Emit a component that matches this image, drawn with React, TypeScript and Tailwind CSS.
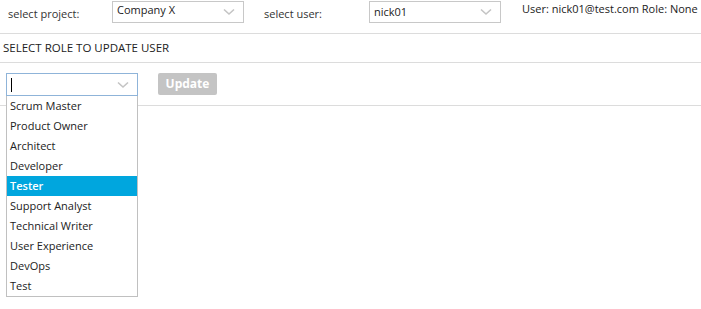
import React from "react";

const Chevron = () => (
  <svg width="12" height="8" viewBox="0 0 12 8" className="shrink-0">
    <path d="M1 1.5 L6 6 L11 1.5" fill="none" stroke="#c4c4c4" strokeWidth="1.6" />
  </svg>
);

const roles = [
  "Scrum Master",
  "Product Owner",
  "Architect",
  "Developer",
  "Tester",
  "Support Analyst",
  "Technical Writer",
  "User Experience",
  "DevOps",
  "Test",
];

export default function App() {
  return (
    <div
      className="w-[701px] h-[309px] bg-white text-[#333] text-[11px] relative overflow-hidden whitespace-nowrap"
      style={{ fontFamily: '"Open Sans", "Noto Sans", sans-serif' }}
    >
      <div className="h-[34px] flex items-start border-b border-[#dcdcdc]">
        <span className="ml-[8px] mt-[6px] w-[104px] shrink-0">select project:</span>
        <div className="shrink-0 mt-[1px] w-[132px] h-[22px] border border-[#c8c8c8] flex items-center justify-between pl-[4px] pr-[8px]">
          <span className="text-[#222] -mt-[3px]">Company X</span>
          <Chevron />
        </div>
        <span className="shrink-0 ml-[20px] mt-[6px] w-[105px]">select user:</span>
        <div className="shrink-0 mt-[1px] w-[132px] h-[22px] border border-[#c8c8c8] flex items-center justify-between pl-[4px] pr-[8px]">
          <span className="text-[#222]">nick01</span>
          <Chevron />
        </div>
        <span className="shrink-0 ml-[21px] mt-[1px] text-[#222]">User: nick01@test.com Role: None</span>
      </div>
      <div className="h-[29px] border-b border-[#dcdcdc] flex items-center pl-[3px] text-[#222] text-[11.5px]">
        SELECT ROLE TO UPDATE USER
      </div>
      <div className="h-[43px] border-b border-[#dcdcdc] flex items-start pt-[10px] pl-[6px]">
        <div className="relative shrink-0">
          <div className="w-[132px] h-[23px] border border-[#8fb4d9] flex items-center justify-between pl-[4px] pr-[8px]">
            <span className="w-px h-[14px] bg-black" />
            <Chevron />
          </div>
          <div className="absolute left-0 top-[23px] w-[132px] border border-t-0 border-[#c0c0c0] bg-white z-10">
            {roles.map((r) => (
              <div
                key={r}
                className={
                  "h-[20px] flex items-center pl-[3px] " +
                  (r === "Tester" ? "bg-[#00a6de] text-white font-semibold" : "text-[#222]")
                }
              >
                {r}
              </div>
            ))}
          </div>
        </div>
        <div className="shrink-0 ml-[20px] w-[59px] h-[22px] rounded-[2px] bg-[#c4c4c4] text-white font-bold flex items-center justify-center text-[12px]">
          Update
        </div>
      </div>
    </div>
  );
}
